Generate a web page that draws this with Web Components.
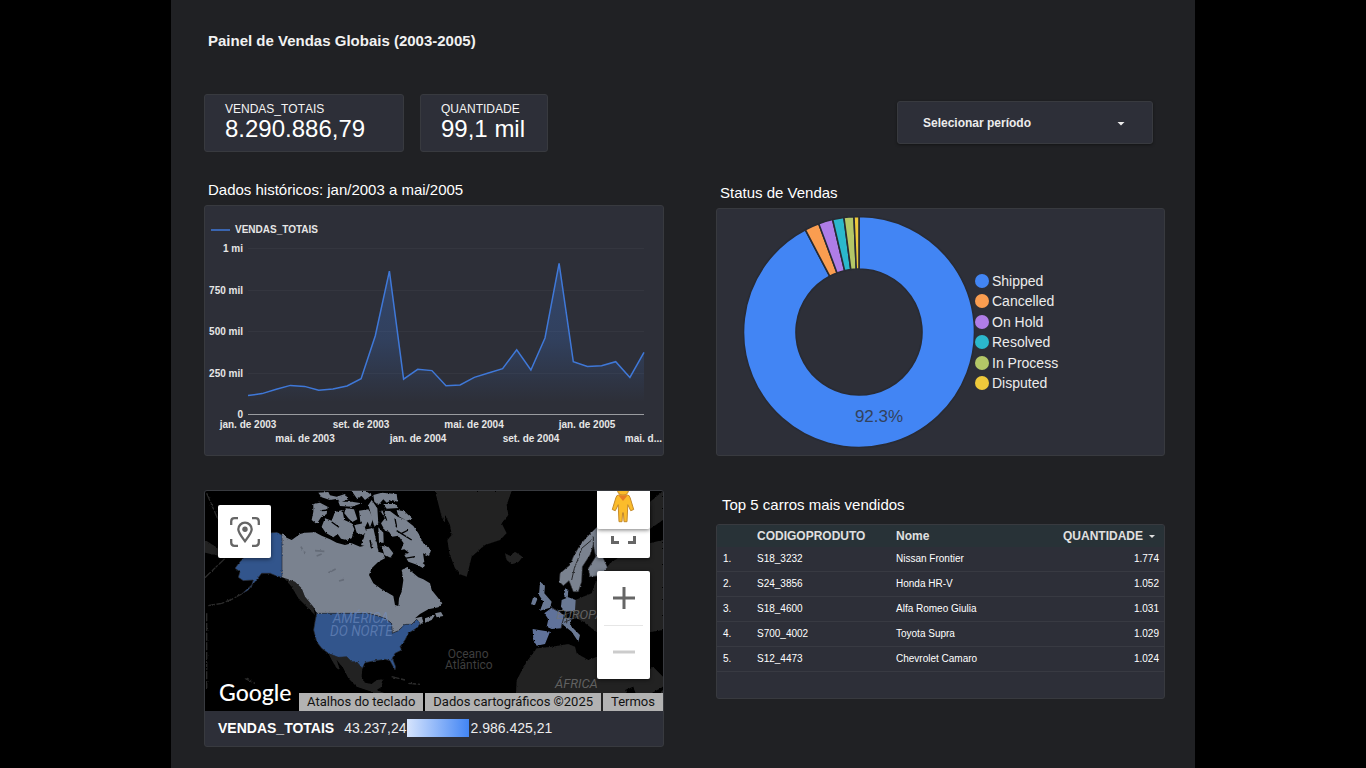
<!DOCTYPE html>
<html lang="pt-BR">
<head>
<meta charset="utf-8">
<meta name="viewport" content="width=device-width, initial-scale=1">
<title>Painel de Vendas Globais</title>
<style>
  html { background: #000; }
  body {
    margin: 0;
    font-family: "Liberation Sans", Arial, sans-serif;
    color: #fff;
    --card: #2d2f38;
    --edge: #383a3f;
    --page: #202124;
  }
</style>
</head>
<body>
<sales-dashboard>
  <h1 slot="title">Painel de Vendas Globais (2003-2005)</h1>

  <kpi-card slot="kpi" wide label="VENDAS_TOTAIS">8.290.886,79</kpi-card>
  <kpi-card slot="kpi" label="QUANTIDADE">99,1 mil</kpi-card>

  <titled-panel slot="left" heading="Dados históricos: jan/2003 a mai/2005"><line-chart></line-chart></titled-panel>
  <geo-map slot="left"></geo-map>

  <period-picker slot="right">Selecionar período</period-picker>
  <titled-panel slot="right" heading="Status de Vendas"><donut-chart></donut-chart></titled-panel>
  <titled-panel slot="right" class="top" heading="Top 5 carros mais vendidos"><top-table></top-table></titled-panel>
</sales-dashboard>

<script>
class BaseElement extends HTMLElement {
  connectedCallback() {
    if (this.shadowRoot) return;
    this.attachShadow({ mode: "open" }).innerHTML = this.view();
  }
}

customElements.define("sales-dashboard", class extends BaseElement {
  view() {
    return `
    <style>
      :host { display: block; max-width: 1024px; min-height: 100vh; margin: 0 auto; background: var(--page); }
      main { box-sizing: border-box; padding: 32px 30px 21px 33px; }
      ::slotted(h1) { margin: 0 0 45px 4px; font-size: 15px; line-height: 17px; font-weight: 700; color: #f1f1f1; }
      .columns { display: grid; grid-template-columns: 460fr 449fr; column-gap: 52px; align-items: start; }
      .left, .right { display: flex; flex-direction: column; min-width: 0; }
      .kpis { display: flex; gap: 16px; margin-bottom: -5px; }
      .left { row-gap: 34px; }
      .right { row-gap: 40px; padding-top: 7px; }
      @media (max-width: 800px) { .columns { grid-template-columns: 1fr; row-gap: 34px; } }
    </style>
    <main>
      <slot name="title"></slot>
      <div class="columns">
        <div class="left">
          <div class="kpis"><slot name="kpi"></slot></div>
          <slot name="left"></slot>
        </div>
        <div class="right"><slot name="right"></slot></div>
      </div>
    </main>`;
  }
});

customElements.define("kpi-card", class extends BaseElement {
  view() {
    return `
    <style>
      :host { display: block; box-sizing: border-box; width: 128px; height: 58px; padding: 7px 0 0 20px;
        background: var(--card); border: 1px solid var(--edge); border-radius: 3px; }
      :host([wide]) { width: 200px; }
      .label { font-size: 12px; line-height: 15px; font-kerning: none; color: #f4f4f4; }
      .value { font-size: 24px; line-height: 24px; }
    </style>
    <div class="label">${this.getAttribute("label")}</div>
    <div class="value"><slot></slot></div>`;
  }
});

customElements.define("period-picker", class extends BaseElement {
  view() {
    return `
    <style>
      :host { display: flex; justify-content: flex-end; padding-right: 12px; }
      button { box-sizing: border-box; width: 256px; height: 43px; padding: 0 25px; display: flex; align-items: center;
        justify-content: space-between; color: #ececec; background: var(--card); border: 1px solid var(--edge);
        border-radius: 3px; box-shadow: 0 1px 3px #0006; font: 700 12px/16px "Liberation Sans", Arial, sans-serif; }
      svg { width: 12px; height: 12px; }
    </style>
    <button type="button" aria-haspopup="dialog"><slot></slot>
      <svg viewBox="0 0 12 12" aria-hidden="true"><path d="M2.500 5h7L6 8.500z" fill="#ececec"/></svg>
    </button>`;
  }
});

customElements.define("titled-panel", class extends BaseElement {
  view() {
    return `
    <style>
      :host { display: block; }
      h2 { margin: 0 0 6px 4px; font-size: 15px; line-height: 18px; font-weight: 400; }
      :host(.top) h2 { margin: 0 0 10px 6px; }
      .card { box-sizing: border-box; background: var(--card); border: 1px solid var(--edge); border-radius: 3px; overflow: hidden; }
    </style>
    <h2>${this.getAttribute("heading")}</h2>
    <div class="card"><slot></slot></div>`;
  }
});

customElements.define("line-chart", class extends BaseElement {
  view() {
    const sales = [111,123,149,173,167,143,151,169,213,473,863,211,270,262,171,175,221,248,274,388,266,459,910,316,287,292,316,221,372];
    const left = 43, base = 208, step = 396 / 28, scale = 0.1655;
    const points = sales.map((v, i) => `${(left + i * step).toFixed(1)},${(base - v * scale).toFixed(1)}`).join(" ");
    const ticks = [["1 mi", 42], ["750 mil", 84], ["500 mil", 125], ["250 mil", 167], ["0", 208]];
    const months = [["jan. de 2003", 0], ["mai. de 2003", 4], ["set. de 2003", 8], ["jan. de 2004", 12], ["mai. de 2004", 16], ["set. de 2004", 20], ["jan. de 2005", 24]];
    return `
    <style>
      :host { display: block; }
      svg { display: block; width: 100%; height: auto; }
      text { font: 700 10px "Liberation Sans", Arial, sans-serif; fill: #e6e6e6; }
      .end { text-anchor: end; } .mid { text-anchor: middle; }
    </style>
    <svg viewBox="0 0 458 249" role="img" aria-label="VENDAS_TOTAIS por mês">
      <defs><linearGradient id="fade" gradientUnits="userSpaceOnUse" x1="0" y1="58" x2="0" y2="208">
        <stop offset="0" stop-color="#4285f4" stop-opacity=".27"/><stop offset=".5" stop-color="#4285f4" stop-opacity=".2"/><stop offset=".92" stop-color="#4285f4" stop-opacity="0"/>
      </linearGradient></defs>
      <path d="M6 24h19" stroke="#3f78d8" stroke-width="1.3"/>
      <text x="30" y="27">VENDAS_TOTAIS</text>
      ${ticks.map(([t, y], i) => `<path d="M43 ${y + .5}h396" stroke="${i === 4 ? "#9a9ca0" : "#34363f"}"/><text class="end" x="38" y="${y + 4}">${t}</text>`).join("")}
      <polygon points="${left},${base} ${points} 439,${base}" fill="url(#fade)"/>
      <polyline points="${points}" fill="none" stroke="#3f78d8" stroke-width="1.5"/>
      ${months.map(([t, i]) => `<text class="mid" x="${Math.round(left + i * step)}" y="${i % 8 ? 236 : 222}">${t}</text>`).join("")}
      <text class="end" x="457" y="236">mai. d...</text>
    </svg>`;
  }
});

customElements.define("donut-chart", class extends BaseElement {
  view() {
    const slices = [["Shipped", "#4285f4", 0, 332.3], ["Cancelled", "#fa9d50", 332.3, 339.6], ["On Hold", "#af7de7", 339.6, 346.8],
      ["Resolved", "#2bb8cc", 346.8, 352.5], ["In Process", "#b4c767", 352.5, 357.5], ["Disputed", "#eec93b", 357.5, 360]];
    const at = (deg, r) => {
      const a = deg * Math.PI / 180;
      return `${(116 + r * Math.sin(a)).toFixed(2)} ${(116 - r * Math.cos(a)).toFixed(2)}`;
    };
    const arc = ([, color, a, b]) => {
      const big = b - a > 180 ? 1 : 0;
      return `<path fill="${color}" d="M${at(a, 115.5)}A115.5 115.5 0 ${big} 1 ${at(b, 115.5)}L${at(b, 63)}A63 63 0 ${big} 0 ${at(a, 63)}Z"/>`;
    };
    return `
    <style>
      :host { display: flex; align-items: center; padding: 7px 0 7px 26px; }
      svg { display: block; width: 232px; height: 232px; flex: none; }
      path { stroke: #282b34; stroke-width: 1.6; }
      text { font: 17px "Liberation Sans", Arial, sans-serif; fill: #33425c; text-anchor: middle; }
      ul { margin: 0; padding: 0; list-style: none; height: 123px; display: grid; grid-auto-rows: 1fr; }
      li { display: flex; align-items: center; gap: 3px; font-size: 14px; color: #ececec; }
      i { width: 14px; height: 14px; border-radius: 50%; }
    </style>
    <svg viewBox="0 0 232 232" role="img" aria-label="Status de Vendas">
      ${slices.map(arc).join("")}
      <text x="136" y="206">92.3%</text>
    </svg>
    <ul>${slices.map(([name, color]) => `<li><i style="background:${color}"></i>${name}</li>`).join("")}</ul>`;
  }
});

customElements.define("geo-map", class extends BaseElement {
  view() {
    return `
    <style>
      :host { display: block; box-sizing: border-box; border: 1px solid var(--edge); border-radius: 3px; background: var(--card); overflow: hidden; }
      .map { position: relative; background: #000; overflow: hidden; }
      .world { display: block; width: 100%; height: auto; }
      .world text { font-family: Roboto, sans-serif; }
      button { padding: 0; border: 0; background: #fff; display: grid; place-items: center; }
      .box { position: absolute; width: 53px; border-radius: 2px; box-shadow: 0 1px 4px #0008; background: #fff; }
      .locate { left: 13px; top: 14px; height: 53px; }
      .full { right: 13px; top: 14px; height: 53px; align-items: end; }
      .pegman { right: 13px; top: -16px; height: 54px; align-items: end; }
      .zoom { right: 13px; top: 80px; }
      .zoom button { width: 100%; height: 54px; background: none; }
      .zoom hr { margin: 0 7px -1px; border: 0; height: 1px; background: #e6e6e6; }
      .logo { position: absolute; left: 14px; bottom: 3px; font: 500 23px/32px Lato, sans-serif; color: #fff; }
      .credits { position: absolute; right: 0; bottom: 0; display: flex; gap: 2px; font: 13px/18px Roboto, sans-serif; }
      .credits a, .credits button { background: #b2b2b2; color: #111; padding: 0 8px; font: inherit; text-decoration: none; white-space: nowrap; }
      .legend { display: flex; align-items: center; height: 34px; padding: 0 0 1px 13px; font-size: 14px; line-height: 16px; color: #ececec; }
      .legend b { margin-right: 10px; color: #fff; }
      .ramp { width: 62px; height: 18px; margin: 0 1px; background: linear-gradient(90deg, #d6e4fd, #4285f4); }
    </style>
    <div class="map">
      <svg class="world" viewBox="0 3 1374 660" role="img" aria-label="Mapa de vendas por país">
        <defs><filter id="coast" x="0" y="0" width="1" height="1"><feTurbulence type="fractalNoise" baseFrequency=".16" numOctaves="2" seed="4"/><feDisplacementMap in="SourceGraphic" scale="7" xChannelSelector="R" yChannelSelector="G"/></filter></defs>
        <g filter="url(#coast)">
          <g fill="#212121">
            <path d="M690 3 710 55 735 105 740 135 727 150 733 190 750 235 765 253 785 260 800 200 840 165 885 150 905 130 890 100 910 75 905 45 920 3Z"/>
            <path d="M900 190 915 197 930 185 953 200 940 217 920 223 905 210Z"/>
            <path d="M370 490 400 502 425 500 440 515 455 515 472 535 470 560 480 578 500 582 515 570 535 568 530 590 515 600 540 610 600 640 600 663 560 663 540 630 500 605 455 590 430 565 415 535 395 510 405 540 395 535 380 510Z"/>
            <path d="M235 262 265 270 290 295 300 320 325 350 330 375 300 345 280 325 260 290Z"/>
            <path d="M0 150 35 172 62 202 30 195 0 188Z"/>
            <path d="M1110 330 1160 310 1170 280 1215 220 1290 170 1374 150 1374 420 1250 440 1180 430 1160 415 1135 395 1105 380Z"/>
            <path d="M1300 110 1330 40 1374 3V90L1330 120Z"/>
            <path d="M930 663 935 570 965 515 995 475 1040 470 1090 462 1110 470 1115 490 1150 510 1190 495 1250 505 1300 560 1345 530 1374 560V663Z"/>
            <path d="M690 3H720V100L710 80Z"/>
          </g>
          <path d="M1260 600 1285 590 1300 640 1340 610 1374 590V600L1320 650 1290 655Z" fill="#000"/>
          <g fill="none" stroke="#2c2c2c" stroke-width="4">
            <path d="M0 263 62 203M5 10 42 95M110 312 80 328 50 340 10 347M560 560 600 570M610 580 645 583M120 565 150 580M5 370V600" stroke-dasharray="24 5"/>
          </g>
          <g fill="#7a828f">
            <path d="M231 130 245 143 260 150 285 132 300 128 330 127 350 137 375 148 395 158 420 165 440 160 465 170 490 165 500 172 505 150 515 155 520 185 535 190 540 205 520 215 500 235 492 255 505 280 530 298 565 318 570 345 580 348 582 325 590 305 595 270 590 240 605 232 620 245 640 262 655 268 675 280 680 300 700 325 712 340 700 352 670 358 645 372 630 385 650 380 655 395 645 405 635 388 620 403 600 403 580 422 562 430 560 400 540 385 520 378 490 370 335 370 325 350 300 320 290 295 270 275 250 268 231 262Z"/>
            <path d="M325 42 345 38 368 50 365 72 348 82 335 102 320 90 325 65Z"/>
            <path d="M360 85 380 92 390 66 412 60 418 90 440 100 448 118 440 145 425 150 408 146 398 132 385 142 362 128 350 110Z"/>
            <path d="M340 8 370 6 375 16 395 20 420 12 430 28 405 38 398 26 375 30 350 22Z"/>
            <path d="M440 3H482L500 15 480 30 470 18 455 25Z"/>
            <path d="M505 15 530 8 575 12 578 35 560 30 545 38 535 28 520 45 508 35Z"/>
            <path d="M422 55 447 58 457 88 442 96 430 85 418 70Z"/>
            <path d="M462 62 490 58 505 85 495 112 488 95 480 112 466 95Z"/>
            <path d="M500 30 517 55 520 100 508 110 500 80 490 45Z"/>
            <path d="M400 35 440 35 470 40 440 50 405 48Z"/>
            <path d="M448 105 476 100 484 125 474 135 455 128Z"/>
            <path d="M484 118 505 114 513 150 492 172 468 165 476 145Z"/>
            <path d="M575 60 598 64 622 86 604 92 580 78ZM535 42 570 42 580 54 545 56Z"/>
            <path d="M526 62 555 63 578 80 602 90 625 108 640 130 655 160 678 180 672 198 654 190 658 216 640 226 610 215 598 195 612 188 598 178 588 180 596 160 580 137 562 140 552 125 540 122 528 100 540 85Z"/>
            <path d="M530 168 550 170 565 190 555 205 538 195Z"/>
            <path d="M520 112 535 128 536 158 522 158Z"/>
            <path d="M632 222 655 235 660 225 648 215ZM690 370 708 366 715 378 695 382ZM660 385 690 375 680 390 660 398Z"/>
          </g>
          <path fill="none" stroke="#000" stroke-width="4" d="M535 62 545 92M570 85 575 112M380 96 402 112M610 120 590 130M545 200 575 215 600 235M600 205 630 200M575 122 620 150M370 60 350 62M495 150 500 175M420 150 440 158"/>
          <path fill="none" stroke="#656c78" stroke-width="5" d="M330 182 358 184M335 198 350 192M370 248 392 237M402 273 417 269M288 170 292 178M298 184 300 192"/>
          <path fill="#7a828f" stroke="#303236" stroke-width="2" d="M1175 112 1145 142 1125 165 1105 200 1095 225 1065 250 1063 275 1075 287 1092 272 1105 305 1120 305 1130 275 1132 230 1155 195 1165 165 1172 200 1150 235 1155 260 1185 257 1207 232 1195 205 1190 120Z"/>
          <path fill="none" stroke="#252629" stroke-width="3" d="M1160 150 1130 175 1118 210 1108 235 1100 270M1165 140V170"/>
          <path fill="#6a7994" d="M1005 275 1020 287 1018 310 1040 335 1035 353 1005 362 1015 335 1002 315ZM985 320 998 325 990 345 978 343ZM1070 330 1090 322 1112 330 1110 362 1080 365 1068 350ZM1070 385 1100 385 1095 405 1125 435 1120 455 1100 425 1075 405ZM1080 295 1090 300 1088 325 1078 320Z"/>
          <path fill="#60729a" d="M1018 370 1040 353 1078 375 1068 415 1040 417 1025 410 1030 388ZM983 417 1035 425 1020 462 995 467 985 450Z"/>
          <path fill="none" stroke="#303236" stroke-width="3" d="M1040 353 1078 375 1068 415M1078 375 1110 362 1130 385M1070 400 1130 375M1085 370V400"/>
          <g fill="#30548c" stroke="#282b31" stroke-width="2">
            <path d="M335 370H490L520 378 540 385 560 400 562 430 580 422 600 403 620 403 635 388 645 400 638 412 610 430 600 450 585 470 590 480 570 490 562 505 572 530 570 540 555 512 540 508 510 512 480 518 472 535 455 515 440 515 425 500 400 502 370 490 350 475 335 455 326 420 330 395Z"/>
            <path d="M130 140 200 128 215 127 231 135V262L215 258 195 250 170 250 150 275 130 300 110 312 140 285 145 270 115 272 100 262 105 245 90 235 105 215 115 205 90 190Z"/>
          </g>
        </g>
        <g font-size="41" font-style="italic">
          <g fill="#7390c4" fill-opacity=".6"><text x="383" y="399">AMÉRICA</text><text x="375" y="438">DO NORTE</text></g>
          <g fill="#777" fill-opacity=".75" font-size="39"><text x="1054" y="386">EUROPA</text><text x="1050" y="594">ÁFRICA</text></g>
        </g>
        <g font-size="36" fill="#3e3e3e"><text x="728" y="503">Oceano</text><text x="720" y="536">Atlântico</text></g>
      </svg>
      <button class="box locate" type="button" aria-label="Redefinir visualização">
        <svg width="30" height="30" viewBox="0 0 30 30" fill="none" stroke="#666" stroke-width="2.3">
          <path d="M1.2 8V4.500Q1.200 1.200 4.500 1.200H8M22 1.200h3.500q3.300 0 3.300 3.300V8M28.800 22v3.500q0 3.300-3.300 3.300H22M8 28.800H4.500q-3.300 0-3.300-3.300V22"/>
          <path d="M15 24.200C11 19 8.300 15.700 8.300 12.300a6.700 6.700 0 0 1 13.400 0C21.700 15.700 19 19 15 24.200Z"/><circle cx="15" cy="12.300" r="2.700" fill="#666" stroke="none"/>
        </svg>
      </button>
      <button class="box full" type="button" aria-label="Tela cheia">
        <svg width="53" height="24" viewBox="0 0 53 24" fill="none" stroke="#666" stroke-width="3"><path d="M15.500 2V8.500H22M31 8.500h6.500V2"/></svg>
      </button>
      <button class="box pegman" type="button" aria-label="Street View">
        <svg width="53" height="40" viewBox="0 0 53 40">
          <circle cx="26" cy="1" r="5.500" fill="#fbbc2b" stroke="#c48a2c"/>
          <path d="M21.500 6h9q2 0 2.700 3l3.500 11.500-3 1.200-2.900-6-.8 17h-3l-.6-9h-.8l-.6 9h-3l-.8-17-2.900 6-3-1.200 3.500-11.500q.7-3 2.700-3Z" fill="#fbbc2b" stroke="#c48a2c" stroke-width="1"/>
          <path d="M21.500 6.500h9L26 12Z" fill="#e77d25"/>
        </svg>
      </button>
      <div class="box zoom">
        <button type="button" aria-label="Aumentar zoom"><svg width="22" height="22"><path d="M11 0v22M0 11h22" stroke="#666" stroke-width="3"/></svg></button>
        <hr>
        <button type="button" aria-label="Diminuir zoom"><svg width="22" height="22"><path d="M0 11h22" stroke="#ccc" stroke-width="3"/></svg></button>
      </div>
      <span class="logo">Google</span>
      <div class="credits"><button type="button">Atalhos do teclado</button><a href="#dados">Dados cartográficos ©2025</a><a href="#termos">Termos</a></div>
    </div>
    <div class="legend"><b>VENDAS_TOTAIS</b><span>43.237,24</span><span class="ramp"></span><span>2.986.425,21</span></div>`;
  }
});

customElements.define("top-table", class extends BaseElement {
  view() {
    const rows = [["S18_3232", "Nissan Frontier", "1.774"], ["S24_3856", "Honda HR-V", "1.052"], ["S18_4600", "Alfa Romeo Giulia", "1.031"],
      ["S700_4002", "Toyota Supra", "1.029"], ["S12_4473", "Chevrolet Camaro", "1.024"]];
    return `
    <style>
      :host { display: block; padding-bottom: 26px; }
      table { width: 100%; border-collapse: separate; border-spacing: 0; table-layout: fixed; }
      th, td { padding: 0; text-align: left; }
      th { height: 22px; background: #283237; font-size: 12px; line-height: 16px; color: #e0e0e0; }
      td { box-sizing: border-box; height: 25px; font-size: 10px; line-height: 12px; border-bottom: 1px solid #383a42; }
      th:first-child { width: 34px; }
      th:first-child, td:first-child { padding-left: 6px; }
      th:nth-child(2) { width: 139px; }
      th:last-child, td:last-child { padding-right: 5px; text-align: right; }
      svg { width: 12px; height: 12px; margin: 0 1px 0 3px; vertical-align: -2px; }
    </style>
    <table>
      <thead><tr><th aria-label="Posição"></th><th scope="col">CODIGOPRODUTO</th><th scope="col">Nome</th>
        <th scope="col" aria-sort="descending">QUANTIDADE<svg viewBox="0 0 12 12" aria-hidden="true"><path d="M3 5h6L6 8z" fill="#e0e0e0"/></svg></th></tr></thead>
      <tbody>${rows.map((r, i) => `<tr><td>${i + 1}.</td>${r.map(c => `<td>${c}</td>`).join("")}</tr>`).join("")}</tbody>
    </table>`;
  }
});
</script>
</body>
</html>
